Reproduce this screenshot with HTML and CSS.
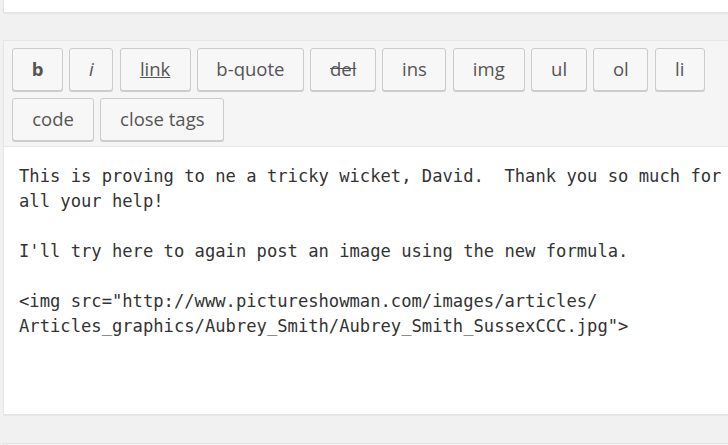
FILE: index.html
```html
<!DOCTYPE html>
<html>
<head>
<meta charset="utf-8">
<link rel="stylesheet" href="styles.css">
</head>
<body>
<div class="page">
  <div class="top-box"></div>
  <div class="editor">
    <div class="toolbar">
      <button class="qt bold w-b">b</button>
      <button class="qt ital w-i">i</button>
      <button class="qt link w-link">link</button>
      <button class="qt w-bquote">b-quote</button>
      <button class="qt del w-del">del</button>
      <button class="qt w-ins">ins</button>
      <button class="qt w-img">img</button>
      <button class="qt w-ul">ul</button>
      <button class="qt w-ol">ol</button>
      <button class="qt w-li">li</button>
      <button class="qt w-code">code</button>
      <button class="qt w-close">close tags</button>
    </div>
    <div class="area">This is proving to ne a tricky wicket, David.  Thank you so much for
all your help!

I'll try here to again post an image using the new formula.

&lt;img src="http://www.pictureshowman.com/images/articles/
Articles_graphics/Aubrey_Smith/Aubrey_Smith_SussexCCC.jpg"&gt;</div>
  </div>
  <div class="bottom-box"></div>
</div>
</body>
</html>
```
FILE: styles.css
```css
html, body {
  margin: 0;
  padding: 0;
  background: #f1f1f1;
  overflow: hidden;
}
.page {
  width: 728px;
  height: 445px;
  overflow: hidden;
  padding-left: 3px;
  box-sizing: border-box;
}
.top-box {
  margin-right: -30px;
  background: #fff;
  border: 1px solid #e5e5e5;
  border-top: none;
  box-shadow: 0 1px 1px rgba(0,0,0,0.04);
  box-sizing: border-box;
  height: 13px;
}
.editor {
  margin-top: 27px;
  margin-right: -30px;
  border: 1px solid #e5e5e5;
  background: #fff;
  box-shadow: 0 1px 1px rgba(0,0,0,0.04);
}
.toolbar {
  display: flex;
  flex-wrap: wrap;
  gap: 6.3px 6.3px;
  padding: 7px 30px 5px 8px;
  background: #f5f5f5;
  border-bottom: 1px solid #e5e5e5;
}
.qt {
  box-sizing: border-box;
  height: 43.4px;
  margin: 0;
  padding: 0;
  background: #f7f7f7;
  border: 1px solid #cccccc;
  border-radius: 3px;
  box-shadow: 0 1px 0 #cccccc;
  color: #555;
  font-family: "Open Sans", sans-serif;
  font-size: 18.5px;
  line-height: 1;
  text-align: center;
}
.w-b { width: 51px; }
.w-i { width: 44px; }
.w-link { width: 71px; }
.w-bquote { width: 107px; }
.w-del { width: 66px; }
.w-ins { width: 64px; }
.w-img { width: 72px; }
.w-ul { width: 56px; }
.w-ol { width: 55px; }
.w-li { width: 50px; }
.w-code { width: 82px; }
.w-close { width: 124px; }
.bold { font-weight: 700; }
.ital { font-style: italic; }
.link { text-decoration: underline; }
.del { text-decoration: line-through; }
.area {
  height: 267px;
  box-sizing: border-box;
  padding: 17px 15px 0;
  background: #fff;
  color: #333;
  font-family: "DejaVu Sans Mono", monospace;
  font-size: 17.17px;
  line-height: 25px;
  white-space: pre;
}
.bottom-box {
  margin-top: 28px;
  margin-right: -30px;
  height: 40px;
  background: #f1f1f1;
  border-top: 1px solid #e5e5e5;
  border-left: 1px solid #e5e5e5;
}
```
